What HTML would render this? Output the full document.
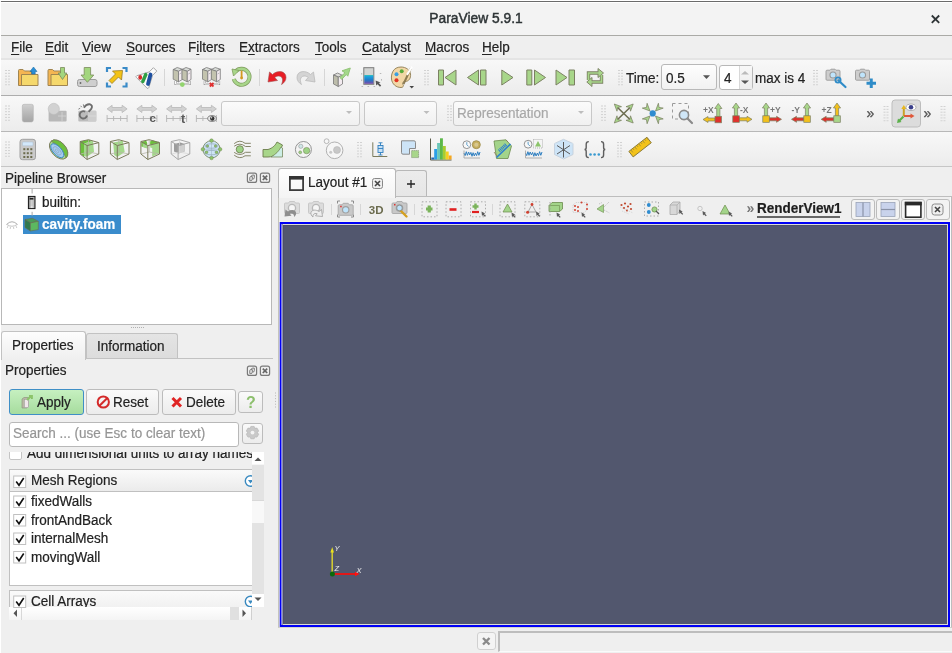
<!DOCTYPE html>
<html><head><meta charset="utf-8">
<style>
*{box-sizing:border-box;margin:0;padding:0}
html,body{width:952px;height:653px;overflow:hidden;background:#efefef}
body{position:relative;font-family:"Liberation Sans",sans-serif;font-size:13.5px;color:#222}
.a{position:absolute}
.t{position:absolute;white-space:pre;line-height:15px;height:15px;font-size:14px;transform:scaleX(0.965);transform-origin:0 0;-webkit-text-stroke:0.2px currentColor}
.u{text-decoration:underline;text-underline-offset:2px}
.hl{position:absolute;height:1px}
.vl{position:absolute;width:1px}
.tb{position:absolute;left:0;width:952px;background:linear-gradient(#f8f8f8,#ececec)}
.grip{position:absolute;width:5px;background-image:radial-gradient(circle,#c4c4c4 0.6px,transparent 0.9px);background-size:2.5px 2.5px}
.ic{position:absolute}
.combo{position:absolute;border:1px solid #c0c0c0;border-radius:3px;background:linear-gradient(#fbfbfb,#f0f0f0)}
.btn{position:absolute;border:1px solid #bcbcbc;border-radius:3px;background:linear-gradient(#fafafa,#ececec)}
</style></head><body><div id="root" style="position:absolute;left:0;top:0;width:952px;height:653px;overflow:hidden;will-change:transform">
<!-- title bar -->
<div class="a" style="left:0;top:0;width:952px;height:35px;background:#f3f3f3"></div>
<div class="hl" style="left:0;top:0;width:952px;background:#fff"></div>
<div class="hl" style="left:1px;top:1px;width:951px;background:#6b6b6b"></div>
<div class="hl" style="left:0;top:2px;width:952px;background:#fff"></div>
<div class="hl" style="left:0;top:35px;width:952px;background:#aaaaa6"></div>
<div class="t" style="left:0;width:952px;text-align:center;top:11px;font-size:13.8px;color:#2e3436;-webkit-text-stroke:0.45px #2e3436;transform:none">ParaView 5.9.1</div>
<svg class="ic" style="left:930px;top:14px" width="11" height="10" viewBox="0 0 11 10"><path d="M1.8 1.5 L9.2 8.8 M9.2 1.5 L1.8 8.8" stroke="#2e3436" stroke-width="1.8"/></svg>

<!-- menu -->
<div class="hl" style="left:0;top:58px;width:952px;height:2px;background:#e4e4e4"></div>
<div class="t" style="left:11px;top:40px"><span class="u">F</span>ile</div>
<div class="t" style="left:45px;top:40px"><span class="u">E</span>dit</div>
<div class="t" style="left:82px;top:40px"><span class="u">V</span>iew</div>
<div class="t" style="left:126px;top:40px"><span class="u">S</span>ources</div>
<div class="t" style="left:188px;top:40px">F<span class="u">i</span>lters</div>
<div class="t" style="left:239px;top:40px">E<span class="u">x</span>tractors</div>
<div class="t" style="left:315px;top:40px"><span class="u">T</span>ools</div>
<div class="t" style="left:362px;top:40px"><span class="u">C</span>atalyst</div>
<div class="t" style="left:425px;top:40px"><span class="u">M</span>acros</div>
<div class="t" style="left:482px;top:40px"><span class="u">H</span>elp</div>

<!-- toolbars -->
<div class="tb" style="top:60px;height:35px"></div>
<div class="hl" style="left:0;top:95px;width:952px;background:#adadad"></div>
<div class="tb" style="top:96px;height:35px"></div>
<div class="hl" style="left:0;top:131px;width:952px;background:#b8b8b8"></div>
<div class="tb" style="top:132px;height:34px"></div>
<div class="hl" style="left:0;top:166px;width:952px;background:#c6c6c6"></div>
<div class="vl" style="left:0;top:3px;height:650px;background:#fff"></div>


<!-- time widgets -->
<div class="t" style="left:626px;top:71px">Time:</div>
<div class="combo" style="left:661px;top:64px;width:56px;height:26px;background:linear-gradient(#fdfdfd,#f1f1f1);border-color:#b8b8b8"></div>
<div class="t" style="left:666px;top:71px">0.5</div>
<div class="a" style="left:719px;top:65px;width:34px;height:25px;background:#fff;border:1px solid #b8b8b8;border-radius:3px"></div>
<div class="a" style="left:739px;top:66px;width:13px;height:23px;background:linear-gradient(#f8f8f8,#ececec);border-left:1px solid #d8d8d8"></div>
<div class="t" style="left:724px;top:71px">4</div>
<div class="t" style="left:755px;top:71px">max is 4</div>
<!-- row 2 combos -->
<div class="combo" style="left:221px;top:101px;width:139px;height:25px;border-color:#c8c8c8"></div>
<div class="combo" style="left:364px;top:101px;width:73px;height:25px;border-color:#c8c8c8"></div>
<div class="combo" style="left:453px;top:101px;width:139px;height:25px;border-color:#c8c8c8"></div>
<div class="t" style="left:457px;top:106px;color:#a8a8a8">Representation</div>

<div id="tb2"></div>
<div id="tb3"></div>

<!-- pipeline browser -->
<div class="t" style="left:5px;top:171px">Pipeline Browser</div>


<div class="a" style="left:1px;top:188px;width:271px;height:137px;background:#fff;border:1px solid #b8b8b8"></div>
<div class="t" style="left:42px;top:195px">builtin:</div>
<div class="a" style="left:23px;top:215px;width:98px;height:19px;background:#3a8ccc"></div>
<div class="t" style="left:42px;top:217px;font-weight:bold;color:#fff">cavity.foam</div>



<!-- right area -->

<div class="a" style="left:278px;top:196px;width:674px;height:432px;background:#efefef;border:1px solid #bdbdbd;border-left-color:#c4c4bc;border-bottom-color:#d4d4cc"></div>
<div class="vl" style="left:950px;top:197px;height:430px;background:#fafafa"></div>
<div class="a" style="left:395px;top:170px;width:32px;height:26px;background:linear-gradient(#ececec,#e6e6e6);border:1px solid #b8b8b8;border-bottom:none;border-radius:3px 3px 0 0"></div>
<div class="a" style="left:278px;top:168px;width:118px;height:30px;background:linear-gradient(#fefefe,#f4f4f4);border:1px solid #b8b8b8;border-bottom:none;border-radius:3px 3px 0 0"></div>
<svg class="ic" style="left:288px;top:175px" width="17" height="17" viewBox="0 0 17 17"><rect x="1.9" y="1.9" width="13.2" height="13.2" fill="none" stroke="#3c3c3c" stroke-width="1.8"/><rect x="1" y="1" width="15" height="3.6" fill="#333"/></svg>
<div class="t" style="left:308px;top:175px">Layout #1</div>
<svg class="ic" style="left:372px;top:178px" width="11" height="11" viewBox="0 0 11 11"><rect x="0.5" y="0.5" width="10" height="10" rx="2" fill="#eee" stroke="#888"/><path d="M3 3 L8 8 M8 3 L3 8" stroke="#444" stroke-width="1.6"/></svg>
<svg class="ic" style="left:406px;top:179px" width="10" height="10" viewBox="0 0 10 10"><path d="M1 5 H9 M5 1 V9" stroke="#222" stroke-width="1.3"/></svg>
<div class="a" style="left:279px;top:221px;width:671px;height:406px;background:#f6f6ea"></div>
<div class="a" style="left:280px;top:222px;width:670px;height:405px;background:#0000f4"></div>
<div class="a" style="left:282px;top:224px;width:666px;height:401px;background:#dcdcd4"></div>
<div class="a" style="left:283px;top:225px;width:664px;height:399px;background:#52576e;border-top:1px solid #4a4e66;border-left:1px solid #4c5068"></div>
<div class="vl" style="left:279px;top:222px;height:405px;background:#b0b0f0"></div>
<div class="vl" style="left:281px;top:224px;height:401px;background:#7c7cf0"></div>
<div class="vl" style="left:282px;top:224px;height:401px;background:#9094aa"></div>
<div class="t" style="left:757px;top:201px;font-weight:bold;color:#1e1e1e">RenderView1</div>
<div class="hl" style="left:757px;top:216px;width:83px;height:2px;background:#666"></div>
<div class="t" style="left:746.5px;top:201px;color:#777;font-size:14px;font-weight:bold;transform:none;-webkit-text-stroke:0">&#187;</div>
<div class="btn" style="left:851px;top:199px;width:24px;height:21px;background:#f3f3f3"></div>
<div class="btn" style="left:876px;top:199px;width:24px;height:21px;background:#f3f3f3"></div>
<div class="btn" style="left:901px;top:199px;width:24px;height:21px;background:#f3f3f3"></div>
<div class="btn" style="left:926px;top:199px;width:24px;height:21px;background:#f3f3f3"></div>


<!-- properties -->

<div class="a" style="left:86px;top:333px;width:92px;height:26px;background:linear-gradient(#e4e4e4,#dcdcdc);border:1px solid #c2c2c2;border-bottom:none;border-radius:3px 3px 0 0"></div>
<div class="hl" style="left:86px;top:358px;width:187px;background:#c2c2c2"></div>
<div class="a" style="left:1px;top:331px;width:85px;height:29px;background:linear-gradient(#fdfdfd,#efefef);border:1px solid #c2c2c2;border-bottom:none;border-radius:3px 3px 0 0"></div>
<div class="t" style="left:12px;top:338px">Properties</div>
<div class="t" style="left:97px;top:339px">Information</div>
<div class="t" style="left:5px;top:363px">Properties</div>

<div class="a" style="left:9px;top:389px;width:75px;height:26px;border:1px solid #3f8fc6;border-radius:3px;background:linear-gradient(#c6f0c0,#a6dc9e)"></div>
<div class="t" style="left:37px;top:395px">Apply</div>
<div class="btn" style="left:86px;top:389px;width:73px;height:26px"></div>
<div class="t" style="left:113px;top:395px">Reset</div>
<div class="btn" style="left:162px;top:389px;width:74px;height:26px"></div>
<div class="t" style="left:186px;top:395px">Delete</div>
<div class="btn" style="left:238px;top:391px;width:25px;height:22px"></div>
<div class="t" style="left:246px;top:394px;color:#8cbf6c;font-size:16px;line-height:17px;height:17px;font-weight:bold;transform:none;-webkit-text-stroke:0">?</div>
<div class="a" style="left:9px;top:422px;width:230px;height:25px;background:#fff;border:1px solid #b8b8b8;border-radius:3px"></div>
<div class="t" style="left:13px;top:426px;color:#959595">Search ... (use Esc to clear text)</div>
<div class="btn" style="left:242px;top:423px;width:21px;height:21px"></div>
<!-- scroll area -->
<div class="a" style="left:9px;top:452px;width:243px;height:155px;overflow:hidden">
  <div class="a" style="left:0;top:-3px;width:13px;height:11px;background:#fff;border:1px solid #c4c4c4;border-radius:2px"></div>
  <div class="t" style="left:18px;top:-6px;color:#222">Add dimensional units to array names</div>
  <div class="a" style="left:0;top:17px;width:260px;height:117px;border:1px solid #c0c0c0;background:#fff"></div>
  <div class="a" style="left:0;top:17px;width:260px;height:23px;border:1px solid #c0c0c0;background:linear-gradient(#fafafa,#ebebeb)"></div>
  <div class="t" style="left:22px;top:21px">Mesh Regions</div>
  <div class="t" style="left:22px;top:42px">fixedWalls</div>
  <div class="t" style="left:22px;top:61px">frontAndBack</div>
  <div class="t" style="left:22px;top:79px">internalMesh</div>
  <div class="t" style="left:22px;top:98px">movingWall</div>
  <div class="a" style="left:0;top:138px;width:260px;height:30px;border:1px solid #c0c0c0;background:linear-gradient(#fafafa,#ebebeb)"></div>
  <div class="t" style="left:22px;top:142px">Cell Arrays</div>
</div>
<!-- v scrollbar -->
<div class="a" style="left:252px;top:452px;width:12px;height:155px;background:#f6f6f6"></div>
<div class="a" style="left:252px;top:452px;width:12px;height:12px;background:#fff"></div>
<div class="a" style="left:252px;top:465px;width:12px;height:130px;background:#e3e3e3"></div>
<div class="a" style="left:252px;top:500px;width:12px;height:23px;background:#f8f8f8;border-top:1px solid #d8d8d8"></div>
<div class="a" style="left:252px;top:594px;width:12px;height:13px;background:#fff"></div>
<!-- h scrollbar -->
<div class="a" style="left:9px;top:607px;width:243px;height:13px;background:linear-gradient(#fff,#f4f4f4)"></div>
<div class="vl" style="left:21px;top:607px;height:13px;background:#d8d8d8"></div>
<div class="a" style="left:230px;top:607px;width:9px;height:13px;background:#e0e0e0"></div>
<div class="vl" style="left:251px;top:607px;height:13px;background:#d0d0d0"></div>


<!-- status bar -->

<div class="btn" style="left:477px;top:632px;width:19px;height:18px;background:#f4f4f4;border-color:#d0d0d0"></div>
<div class="a" style="left:498px;top:631px;width:454px;height:21px;background:#efefef;border-top:2px solid #bdbdbd;border-left:2px solid #bdbdbd;border-bottom:1px solid #fafafa"></div>

<svg class="a" style="left:0;top:0" width="952" height="653" viewBox="0 0 952 653"><rect x="5" y="70.00" width="2" height="1" fill="#d2d2d2"/>
<rect x="8" y="70.00" width="2" height="1" fill="#d2d2d2"/>
<rect x="5" y="72.85" width="2" height="1" fill="#d2d2d2"/>
<rect x="8" y="72.85" width="2" height="1" fill="#d2d2d2"/>
<rect x="5" y="75.70" width="2" height="1" fill="#d2d2d2"/>
<rect x="8" y="75.70" width="2" height="1" fill="#d2d2d2"/>
<rect x="5" y="78.55" width="2" height="1" fill="#d2d2d2"/>
<rect x="8" y="78.55" width="2" height="1" fill="#d2d2d2"/>
<rect x="5" y="81.40" width="2" height="1" fill="#d2d2d2"/>
<rect x="8" y="81.40" width="2" height="1" fill="#d2d2d2"/>
<rect x="5" y="84.25" width="2" height="1" fill="#d2d2d2"/>
<rect x="8" y="84.25" width="2" height="1" fill="#d2d2d2"/>
<path d="M18.5 85.5 V70.5 Q18.5 69.5 19.5 69.5 H23 L24.5 71 H31.5 V85.5 Z" fill="#f4b552" stroke="#a08550"/>
<path d="M21.5 85.5 V74.5 H38 V85.5 Z" fill="#f5d86c" stroke="#a08550"/>
<path d="M33.5 67 L37 71.5 H35.2 V74 H31.8 V71.5 H30 Z" fill="#2a8fd6" stroke="#1f6fa8" stroke-width="0.6"/>
<path d="M48.0 85.5 V70.5 Q48.0 69.5 49.0 69.5 H52.5 L54.0 71 H61.0 V85.5 Z" fill="#f4b552" stroke="#a08550"/>
<path d="M51.0 85.5 V74.5 H67.5 V85.5 Z" fill="#f5d86c" stroke="#a08550"/>
<path d="M60.5 67.5 H64.5 V73 H66.8 L62.5 79.5 L58.2 73 H60.5 Z" fill="#a3d67e" stroke="#7b8b5c" stroke-width="0.8"/>
<rect x="77.5" y="79.5" width="19.5" height="7" rx="2" fill="#cfcfcf" stroke="#9c9c9c"/>
<circle cx="80.5" cy="83" r="0.9" fill="#666"/>
<path d="M84.2 67.5 H90.6 V75 H93.8 L87.4 82.3 L81 75 H84.2 Z" fill="#a3d67e" stroke="#7b8b5c" stroke-width="0.8"/>
<path d="M107 72 V68 H111" fill="none" stroke="#3a8bc8" stroke-width="2.2"/>
<path d="M126.5 72 V68 H122.5" fill="none" stroke="#3a8bc8" stroke-width="2.2"/>
<path d="M107 82.5 V86.5 H111" fill="none" stroke="#3a8bc8" stroke-width="2.2"/>
<path d="M126.5 82.5 V86.5 H122.5" fill="none" stroke="#3a8bc8" stroke-width="2.2"/>
<path d="M122.5 70.5 L121.5 80 L118.5 77 L112 83.5 L109 80.5 L115.5 74 L112.5 71 Z" fill="#f3c316" stroke="#9a7c26" stroke-width="0.8"/>
<g transform="translate(147 77.5) rotate(45)"><path d="M-2.4 -11.5 H2.4 V-5.5 L8.5 6 Q9 7.5 7.5 7.5 H-7.5 Q-9 7.5 -8.5 6 L-2.4 -5.5 Z" fill="#fbfbfb" stroke="#a4a4a4" stroke-width="0.9"/></g>
<ellipse cx="140.2" cy="77.4" rx="1.9" ry="2.3" fill="#d42a2a"/>
<path d="M142.8 81.5 L145.8 74.5" stroke="#2ea043" stroke-width="3.4" stroke-linecap="round"/>
<path d="M148 84 L150.5 74.5" stroke="#1e50a0" stroke-width="3.8" stroke-linecap="round"/>
<rect x="164" y="69" width="1" height="17" fill="#d6d6d6"/>
<path d="M175.5 81 V84 H189.7 V81" fill="none" stroke="#9a9a9a" stroke-width="2.2"/><path d="M175.5 81 V84 H189.7 V81" fill="none" stroke="#fafafa" stroke-width="1"/>
<path d="M173.2 69.5 L177.2 67.5 L182.2 69.2 L178.5 71.3 Z" fill="#d9dcd8" stroke="#7a7a7a" stroke-width="0.8"/>
<path d="M173.2 69.5 L178.5 71.3 V81.8 L173.2 79.2 Z" fill="#c3c3ae" stroke="#7a7a7a" stroke-width="0.8"/>
<path d="M178.5 71.3 L182.2 69.2 V79.5 L178.5 81.8 Z" fill="#f2eaef" stroke="#7a7a7a" stroke-width="0.8"/>
<path d="M179.5 74 L181.2 73" stroke="#999" stroke-width="0.6"/>
<path d="M182.0 69.5 L186.0 67.5 L191.0 69.2 L187.3 71.3 Z" fill="#d9dcd8" stroke="#7a7a7a" stroke-width="0.8"/>
<path d="M182.0 69.5 L187.3 71.3 V81.8 L182.0 79.2 Z" fill="#c3c3ae" stroke="#7a7a7a" stroke-width="0.8"/>
<path d="M187.3 71.3 L191.0 69.2 V79.5 L187.3 81.8 Z" fill="#f2eaef" stroke="#7a7a7a" stroke-width="0.8"/>
<path d="M188.3 74 L190.0 73" stroke="#999" stroke-width="0.6"/>
<circle cx="182.29999999999998" cy="84.6" r="2.4" fill="#92d46e"/>
<path d="M204.8 81 V84 H219.0 V81" fill="none" stroke="#9a9a9a" stroke-width="2.2"/><path d="M204.8 81 V84 H219.0 V81" fill="none" stroke="#fafafa" stroke-width="1"/>
<path d="M202.5 69.5 L206.5 67.5 L211.5 69.2 L207.8 71.3 Z" fill="#d9dcd8" stroke="#7a7a7a" stroke-width="0.8"/>
<path d="M202.5 69.5 L207.8 71.3 V81.8 L202.5 79.2 Z" fill="#c3c3ae" stroke="#7a7a7a" stroke-width="0.8"/>
<path d="M207.8 71.3 L211.5 69.2 V79.5 L207.8 81.8 Z" fill="#f2eaef" stroke="#7a7a7a" stroke-width="0.8"/>
<path d="M208.8 74 L210.5 73" stroke="#999" stroke-width="0.6"/>
<path d="M211.3 69.5 L215.3 67.5 L220.3 69.2 L216.60000000000002 71.3 Z" fill="#d9dcd8" stroke="#7a7a7a" stroke-width="0.8"/>
<path d="M211.3 69.5 L216.60000000000002 71.3 V81.8 L211.3 79.2 Z" fill="#c3c3ae" stroke="#7a7a7a" stroke-width="0.8"/>
<path d="M216.60000000000002 71.3 L220.3 69.2 V79.5 L216.60000000000002 81.8 Z" fill="#f2eaef" stroke="#7a7a7a" stroke-width="0.8"/>
<path d="M217.60000000000002 74 L219.3 73" stroke="#999" stroke-width="0.6"/>
<path d="M209.8 82.8 L213.5 86.5 M213.5 82.8 L209.8 86.5" stroke="#e03030" stroke-width="1.8"/>
<path d="M235.5 71.5 A8 8 0 1 1 233.8 79" fill="none" stroke="#7d9a5c" stroke-width="4"/>
<path d="M235.5 71.5 A8 8 0 1 1 233.8 79" fill="none" stroke="#a8d68a" stroke-width="2.6"/>
<path d="M232 69 L239 70.5 L233.5 76 Z" fill="#a8d68a" stroke="#7d9a5c" stroke-width="0.8"/>
<path d="M241.6 71.5 V77.5" stroke="#d49a20" stroke-width="1.8" stroke-linecap="round"/>
<circle cx="241.6" cy="78" r="1.4" fill="#d49a20"/>
<rect x="259" y="69" width="1" height="17" fill="#d6d6d6"/>
<path d="M268 82 L269.5 72 L272.5 74.5 C277 70 286 70.5 286 77.5 C286 80.5 284 83 281.5 84.5 C283 81.5 283.5 76.5 279 76 C277 75.8 275.5 77 274.8 77.5 L277.5 80.5 Z" fill="#e81d25" stroke="#a05050" stroke-width="0.6"/>
<g transform="translate(583 0) scale(-1 1)"><path d="M268 82 L269.5 72 L272.5 74.5 C277 70 286 70.5 286 77.5 C286 80.5 284 83 281.5 84.5 C283 81.5 283.5 76.5 279 76 C277 75.8 275.5 77 274.8 77.5 L277.5 80.5 Z" fill="#d4d4d4" stroke="#b4b4b4" stroke-width="0.7"/></g>
<rect x="324" y="69" width="1" height="17" fill="#d6d6d6"/>
<path d="M333.5 75 L337.5 73 L342.5 75.3 L338.3 77 Z" fill="#dcdcd8" stroke="#777" stroke-width="0.8"/>
<path d="M333.5 75 L338.3 77 V86.5 L333.5 84 Z" fill="#bdbdab" stroke="#777" stroke-width="0.8"/>
<path d="M338.3 77 L342.5 75.3 V84 L338.3 86.5 Z" fill="#f3ebf0" stroke="#777" stroke-width="0.8"/>
<path d="M339.8 77.5 L345 72.8 L342 70.8 L350.3 68 L347.8 76.2 L346.3 74.5 L341.8 79.3 Z" fill="#a3d88a" stroke="#8cc070" stroke-width="0.9"/>
<defs><linearGradient id="cm" x1="0" y1="0" x2="0" y2="1"><stop offset="0" stop-color="#3cc8a8"/><stop offset="0.12" stop-color="#1aa8e0"/><stop offset="0.55" stop-color="#1f7cc8"/><stop offset="1" stop-color="#7a4aa8"/></linearGradient></defs>
<rect x="363.8" y="67.7" width="10" height="16.6" fill="#d2d4d2" stroke="#7a7a7a" stroke-width="1"/>
<rect x="364.3" y="75" width="9" height="8.8" fill="url(#cm)"/>
<rect x="361.2" y="73" width="1" height="1.6" fill="#b8b8b8"/>
<rect x="361.2" y="79.5" width="1" height="1.6" fill="#b8b8b8"/>
<rect x="361.5" y="86" width="1.6" height="1" fill="#b8b8b8"/>
<rect x="367.5" y="86" width="1.6" height="1" fill="#b8b8b8"/>
<rect x="373.5" y="86" width="1.6" height="1" fill="#b8b8b8"/>
<rect x="379.8" y="73" width="1.5" height="1" fill="#b8b8b8"/>
<rect x="381" y="79" width="1" height="1.6" fill="#b8b8b8"/>
<path d="M375.6 80.5 L376.2 85.5 L377.6 84.2 L380 86.8 L381.2 85.6 L378.8 83 L380.6 82.4 Z" fill="#555"/>
<path d="M401 67 C393 67 391 74 391.5 79 C392 84 396 87.5 401 87.5 C403 87.5 404 86 403 84.5 C402 83 403 81.5 405 81.5 C409 81.5 411 78 410.5 74 C410 70 406 67 401 67 Z" fill="#f2d7a6" stroke="#8c7a50" stroke-width="0.9"/>
<circle cx="396.5" cy="74.3" r="2" fill="#3aa0e0"/><circle cx="401.7" cy="71.2" r="2" fill="#5aab3c"/><circle cx="396.5" cy="80.3" r="2" fill="#e03424"/>
<path d="M411 68 L403.5 84" stroke="#8c7a50" stroke-width="2"/><path d="M411.5 67.5 L407.5 74" stroke="#fff" stroke-width="2.2" stroke-linecap="round"/>
<path d="M409.5 86 H414 L411.75 88.5 Z" fill="#444"/>
<rect x="424" y="70.00" width="2" height="1" fill="#d2d2d2"/>
<rect x="427" y="70.00" width="2" height="1" fill="#d2d2d2"/>
<rect x="424" y="72.85" width="2" height="1" fill="#d2d2d2"/>
<rect x="427" y="72.85" width="2" height="1" fill="#d2d2d2"/>
<rect x="424" y="75.70" width="2" height="1" fill="#d2d2d2"/>
<rect x="427" y="75.70" width="2" height="1" fill="#d2d2d2"/>
<rect x="424" y="78.55" width="2" height="1" fill="#d2d2d2"/>
<rect x="427" y="78.55" width="2" height="1" fill="#d2d2d2"/>
<rect x="424" y="81.40" width="2" height="1" fill="#d2d2d2"/>
<rect x="427" y="81.40" width="2" height="1" fill="#d2d2d2"/>
<rect x="424" y="84.25" width="2" height="1" fill="#d2d2d2"/>
<rect x="427" y="84.25" width="2" height="1" fill="#d2d2d2"/>
<path d="M438.5 70 H443.5 V85 H438.5 Z" fill="#a8d68a" stroke="#7b8062" stroke-width="1"/>
<path d="M456 70 V85 L445 77.5 Z" fill="#a8d68a" stroke="#7b8062" stroke-width="1"/>
<path d="M478.5 70 V85 L467.5 77.5 Z" fill="#a8d68a" stroke="#7b8062" stroke-width="1"/>
<path d="M480.5 70 H486 V85 H480.5 Z" fill="#a8d68a" stroke="#7b8062" stroke-width="1"/>
<path d="M501.8 70 L513 77.5 L501.8 85 Z" fill="#a8d68a" stroke="#7b8062" stroke-width="1"/>
<path d="M526.8 70 H531.8 V85 H526.8 Z" fill="#a8d68a" stroke="#7b8062" stroke-width="1"/>
<path d="M534.5 70 L545.5 77.5 L534.5 85 Z" fill="#a8d68a" stroke="#7b8062" stroke-width="1"/>
<path d="M556 70 L567 77.5 L556 85 Z" fill="#a8d68a" stroke="#7b8062" stroke-width="1"/>
<path d="M569 70 H574.5 V85 H569 Z" fill="#a8d68a" stroke="#7b8062" stroke-width="1"/>
<path d="M588.5 80 V73 H599" fill="none" stroke="#7b8062" stroke-width="3.4"/>
<path d="M601.5 75 V82 H591" fill="none" stroke="#7b8062" stroke-width="3.4"/>
<path d="M598 68.5 L603.5 73 L598 77.5 Z" fill="#a8d68a" stroke="#7b8062" stroke-width="0.9"/>
<path d="M592 77.5 L586.8 82 L592 86.5 Z" fill="#a8d68a" stroke="#7b8062" stroke-width="0.9"/>
<path d="M588.5 80 V73 H599" fill="none" stroke="#a8d68a" stroke-width="1.7"/>
<path d="M601.5 75 V82 H591" fill="none" stroke="#a8d68a" stroke-width="1.7"/>
<rect x="618" y="70.00" width="2" height="1" fill="#d2d2d2"/>
<rect x="621" y="70.00" width="2" height="1" fill="#d2d2d2"/>
<rect x="618" y="72.85" width="2" height="1" fill="#d2d2d2"/>
<rect x="621" y="72.85" width="2" height="1" fill="#d2d2d2"/>
<rect x="618" y="75.70" width="2" height="1" fill="#d2d2d2"/>
<rect x="621" y="75.70" width="2" height="1" fill="#d2d2d2"/>
<rect x="618" y="78.55" width="2" height="1" fill="#d2d2d2"/>
<rect x="621" y="78.55" width="2" height="1" fill="#d2d2d2"/>
<rect x="618" y="81.40" width="2" height="1" fill="#d2d2d2"/>
<rect x="621" y="81.40" width="2" height="1" fill="#d2d2d2"/>
<rect x="618" y="84.25" width="2" height="1" fill="#d2d2d2"/>
<rect x="621" y="84.25" width="2" height="1" fill="#d2d2d2"/>
<rect x="813" y="70.00" width="2" height="1" fill="#d2d2d2"/>
<rect x="816" y="70.00" width="2" height="1" fill="#d2d2d2"/>
<rect x="813" y="72.85" width="2" height="1" fill="#d2d2d2"/>
<rect x="816" y="72.85" width="2" height="1" fill="#d2d2d2"/>
<rect x="813" y="75.70" width="2" height="1" fill="#d2d2d2"/>
<rect x="816" y="75.70" width="2" height="1" fill="#d2d2d2"/>
<rect x="813" y="78.55" width="2" height="1" fill="#d2d2d2"/>
<rect x="816" y="78.55" width="2" height="1" fill="#d2d2d2"/>
<rect x="813" y="81.40" width="2" height="1" fill="#d2d2d2"/>
<rect x="816" y="81.40" width="2" height="1" fill="#d2d2d2"/>
<rect x="813" y="84.25" width="2" height="1" fill="#d2d2d2"/>
<rect x="816" y="84.25" width="2" height="1" fill="#d2d2d2"/>
<path d="M826 71.2 Q826 70.2 827 70.2 H830 L831 69.2 H835 L836 70.2 H839 Q840 70.2 840 71.2 V79.2 Q840 80.2 839 80.2 H827 Q826 80.2 826 79.2 Z" fill="#cdcdcd" stroke="#9a9a9a" stroke-width="0.9"/>
<circle cx="833" cy="75.0" r="3.6" fill="#9a9a9a"/><circle cx="833" cy="75.0" r="2.5" fill="#bfe4fb"/>
<path d="M838.5 80.5 L845.5 87" stroke="#2f8cc8" stroke-width="2.2" stroke-linecap="round"/><circle cx="838" cy="80" r="2.6" fill="none" stroke="#2f8cc8" stroke-width="1.8"/>
<path d="M855.5 71.2 Q855.5 70.2 856.5 70.2 H859.5 L860.5 69.2 H864.5 L865.5 70.2 H868.5 Q869.5 70.2 869.5 71.2 V79.2 Q869.5 80.2 868.5 80.2 H856.5 Q855.5 80.2 855.5 79.2 Z" fill="#cdcdcd" stroke="#9a9a9a" stroke-width="0.9"/>
<circle cx="862.5" cy="75.0" r="3.6" fill="#9a9a9a"/><circle cx="862.5" cy="75.0" r="2.5" fill="#bfe4fb"/>
<path d="M866.5 83.3 H876 M871.25 78.5 V88" stroke="#2f8cc8" stroke-width="3"/>
<rect x="5" y="105.50" width="2" height="1" fill="#d2d2d2"/>
<rect x="8" y="105.50" width="2" height="1" fill="#d2d2d2"/>
<rect x="5" y="108.35" width="2" height="1" fill="#d2d2d2"/>
<rect x="8" y="108.35" width="2" height="1" fill="#d2d2d2"/>
<rect x="5" y="111.20" width="2" height="1" fill="#d2d2d2"/>
<rect x="8" y="111.20" width="2" height="1" fill="#d2d2d2"/>
<rect x="5" y="114.05" width="2" height="1" fill="#d2d2d2"/>
<rect x="8" y="114.05" width="2" height="1" fill="#d2d2d2"/>
<rect x="5" y="116.90" width="2" height="1" fill="#d2d2d2"/>
<rect x="8" y="116.90" width="2" height="1" fill="#d2d2d2"/>
<rect x="5" y="119.75" width="2" height="1" fill="#d2d2d2"/>
<rect x="8" y="119.75" width="2" height="1" fill="#d2d2d2"/>
<defs><linearGradient id="g2" x1="0" y1="0" x2="0" y2="1"><stop offset="0" stop-color="#d0d0d0"/><stop offset="0.4" stop-color="#bdbdbd"/><stop offset="1" stop-color="#a4a4a4"/></linearGradient></defs>
<rect x="22.3" y="104.3" width="11" height="17.6" rx="1.8" fill="url(#g2)" stroke="#b0b0b0" stroke-width="0.6"/>
<rect x="48.6" y="110.8" width="18" height="10.6" rx="1" fill="#b8b8b8"/>
<circle cx="53.8" cy="108.9" r="5.6" fill="#d2d2d2" stroke="#bdbdbd" stroke-width="0.6"/>
<path d="M58 116 H66 M62 112 V121" stroke="#d8d8d8" stroke-width="0.7"/>
<rect x="78.3" y="110.8" width="18" height="10.6" rx="1" fill="#bcbcbc"/><rect x="88" y="110.8" width="8.3" height="10.6" rx="1" fill="#cdcdcd"/><path d="M88 116 H96" stroke="#e0e0e0" stroke-width="0.6"/>
<path d="M85.2 111.6 A3.7 3.7 0 1 0 87 115.5" fill="none" stroke="#6e6e6e" stroke-width="1.9"/>
<path d="M83.8 107.6 Q86.5 103.6 90 104.3 Q93.2 105.5 91.2 109 L88.6 111.8" fill="none" stroke="#6e6e6e" stroke-width="1.9"/>
<path d="M78.4 109.2 L80.2 108.2 M80.6 105.8 L81.8 107.2 M83.3 104.3 L83.7 106" stroke="#777" stroke-width="0.9"/>
<path d="M107.1 108.9 L112.1 105.3 V107.5 H122.1 V105.3 L127.1 108.9 L122.1 112.5 V110.3 H112.1 V112.5 Z" fill="#d2d2d2" stroke="#b8b8b8" stroke-width="0.8"/>
<path d="M107.1 118.5 H127.1 M107.1 115 V122 M113.6 116 V121 M120.6 116 V121 M127.1 115 V122" stroke="#b4b4b4" stroke-width="0.9"/>
<path d="M136.9 108.9 L141.9 105.3 V107.5 H151.9 V105.3 L156.9 108.9 L151.9 112.5 V110.3 H141.9 V112.5 Z" fill="#d2d2d2" stroke="#b8b8b8" stroke-width="0.8"/>
<path d="M136.9 118.5 H156.9 M136.9 115 V122 M143.4 116 V121 M150.4 116 V121 M156.9 115 V122" stroke="#b4b4b4" stroke-width="0.9"/>
<text x="149.5" y="122.3" font-family="Liberation Sans" font-weight="bold" font-size="11.5" fill="#5a5a5a">c</text>
<path d="M166.6 108.9 L171.6 105.3 V107.5 H181.6 V105.3 L186.6 108.9 L181.6 112.5 V110.3 H171.6 V112.5 Z" fill="#d2d2d2" stroke="#b8b8b8" stroke-width="0.8"/>
<path d="M166.6 118.5 H186.6 M166.6 115 V122 M173.1 116 V121 M180.1 116 V121 M186.6 115 V122" stroke="#b4b4b4" stroke-width="0.9"/>
<text x="181" y="122.5" font-family="Liberation Sans" font-weight="bold" font-size="12.5" fill="#5a5a5a">t</text>
<path d="M196.4 108.9 L201.4 105.3 V107.5 H211.4 V105.3 L216.4 108.9 L211.4 112.5 V110.3 H201.4 V112.5 Z" fill="#d2d2d2" stroke="#b8b8b8" stroke-width="0.8"/>
<path d="M196.4 118.5 H216.4 M196.4 115 V122 M202.9 116 V121 M209.9 116 V121 M216.4 115 V122" stroke="#b4b4b4" stroke-width="0.9"/>
<ellipse cx="212" cy="118.5" rx="4.3" ry="2.9" fill="#e8e8e8" stroke="#666" stroke-width="0.8"/><circle cx="212.3" cy="118.5" r="2.2" fill="#333"/><circle cx="211.6" cy="117.8" r="0.7" fill="#ddd"/>
<rect x="447" y="105.50" width="2" height="1" fill="#d2d2d2"/>
<rect x="450" y="105.50" width="2" height="1" fill="#d2d2d2"/>
<rect x="447" y="108.35" width="2" height="1" fill="#d2d2d2"/>
<rect x="450" y="108.35" width="2" height="1" fill="#d2d2d2"/>
<rect x="447" y="111.20" width="2" height="1" fill="#d2d2d2"/>
<rect x="450" y="111.20" width="2" height="1" fill="#d2d2d2"/>
<rect x="447" y="114.05" width="2" height="1" fill="#d2d2d2"/>
<rect x="450" y="114.05" width="2" height="1" fill="#d2d2d2"/>
<rect x="447" y="116.90" width="2" height="1" fill="#d2d2d2"/>
<rect x="450" y="116.90" width="2" height="1" fill="#d2d2d2"/>
<rect x="447" y="119.75" width="2" height="1" fill="#d2d2d2"/>
<rect x="450" y="119.75" width="2" height="1" fill="#d2d2d2"/>
<rect x="601" y="105.50" width="2" height="1" fill="#d2d2d2"/>
<rect x="604" y="105.50" width="2" height="1" fill="#d2d2d2"/>
<rect x="601" y="108.35" width="2" height="1" fill="#d2d2d2"/>
<rect x="604" y="108.35" width="2" height="1" fill="#d2d2d2"/>
<rect x="601" y="111.20" width="2" height="1" fill="#d2d2d2"/>
<rect x="604" y="111.20" width="2" height="1" fill="#d2d2d2"/>
<rect x="601" y="114.05" width="2" height="1" fill="#d2d2d2"/>
<rect x="604" y="114.05" width="2" height="1" fill="#d2d2d2"/>
<rect x="601" y="116.90" width="2" height="1" fill="#d2d2d2"/>
<rect x="604" y="116.90" width="2" height="1" fill="#d2d2d2"/>
<rect x="601" y="119.75" width="2" height="1" fill="#d2d2d2"/>
<rect x="604" y="119.75" width="2" height="1" fill="#d2d2d2"/>
<path d="M616 106 L631.5 121 M631.5 106 L616 121" stroke="#6e6e52" stroke-width="1.6"/>
<g transform="translate(614.3 104) rotate(45)"><path d="M0 0 L7 -3.2 L4.8 0 L7 3.2 Z" fill="#a8d68a" stroke="#7b8062" stroke-width="0.7"/></g>
<g transform="translate(633.2 104) rotate(135)"><path d="M0 0 L7 -3.2 L4.8 0 L7 3.2 Z" fill="#a8d68a" stroke="#7b8062" stroke-width="0.7"/></g>
<g transform="translate(614.3 123) rotate(-45)"><path d="M0 0 L7 -3.2 L4.8 0 L7 3.2 Z" fill="#a8d68a" stroke="#7b8062" stroke-width="0.7"/></g>
<g transform="translate(633.2 123) rotate(-135)"><path d="M0 0 L7 -3.2 L4.8 0 L7 3.2 Z" fill="#a8d68a" stroke="#7b8062" stroke-width="0.7"/></g>
<g transform="translate(650 111) rotate(-135)"><path d="M0 0 L7.5 -3.4 L5 0 L7.5 3.4 Z" fill="#a8d68a" stroke="#7b8062" stroke-width="0.7"/></g>
<g transform="translate(655.5 111) rotate(-45)"><path d="M0 0 L7.5 -3.4 L5 0 L7.5 3.4 Z" fill="#a8d68a" stroke="#7b8062" stroke-width="0.7"/></g>
<g transform="translate(650 116) rotate(135)"><path d="M0 0 L7.5 -3.4 L5 0 L7.5 3.4 Z" fill="#a8d68a" stroke="#7b8062" stroke-width="0.7"/></g>
<g transform="translate(655.5 116) rotate(45)"><path d="M0 0 L7.5 -3.4 L5 0 L7.5 3.4 Z" fill="#a8d68a" stroke="#7b8062" stroke-width="0.7"/></g>
<circle cx="652.7" cy="113.4" r="3.1" fill="#2f8cd0"/>
<rect x="672.5" y="103.5" width="16" height="15.5" fill="none" stroke="#9a9a9a" stroke-width="1" stroke-dasharray="3 3"/>
<circle cx="684" cy="115" r="4.6" fill="#cfe6f7" stroke="#8a8a8a" stroke-width="1.6"/>
<path d="M687.5 118.5 L692 123" stroke="#8a8a8a" stroke-width="2.2" stroke-linecap="round"/>
<path d="M703 119.5 L708 116.5 V118.0 H715 V121.0 H708 V122.5 Z" fill="#f2c01c" stroke="#7b8062" stroke-width="0.7"/>
<path d="M718.3 103.5 L721.9 108.5 H719.9 V116.5 H716.6999999999999 V108.5 H714.6999999999999 Z" fill="#a8d68a" stroke="#7b8062" stroke-width="0.7"/>
<rect x="715" y="116.3" width="6.5" height="6.5" fill="#e0312c" stroke="#7b8062" stroke-width="0.7"/>
<text x="703" y="112.5" font-family="Liberation Sans" font-weight="bold" font-size="8.5" fill="#777">+X</text>
<path d="M752 119.3 L747 116.3 V117.8 H739 V120.8 H747 V122.3 Z" fill="#f2c01c" stroke="#7b8062" stroke-width="0.7"/>
<path d="M736 103 L739.6 108 H737.6 V116 H734.4 V108 H732.4 Z" fill="#a8d68a" stroke="#7b8062" stroke-width="0.7"/>
<rect x="732.8" y="115.8" width="6.5" height="6.5" fill="#e0312c" stroke="#7b8062" stroke-width="0.7"/>
<text x="740" y="113" font-family="Liberation Sans" font-weight="bold" font-size="8.5" fill="#777">-X</text>
<path d="M781.5 119.3 L776.5 116.3 V117.8 H769 V120.8 H776.5 V122.3 Z" fill="#e0312c" stroke="#7b8062" stroke-width="0.7"/>
<path d="M766 103 L769.6 108 H767.6 V116 H764.4 V108 H762.4 Z" fill="#a8d68a" stroke="#7b8062" stroke-width="0.7"/>
<rect x="762.8" y="115.8" width="6.5" height="6.5" fill="#f2c01c" stroke="#7b8062" stroke-width="0.7"/>
<text x="770" y="113" font-family="Liberation Sans" font-weight="bold" font-size="8.5" fill="#777">+Y</text>
<path d="M791.5 119.3 L796.5 116.3 V117.8 H804 V120.8 H796.5 V122.3 Z" fill="#e0312c" stroke="#7b8062" stroke-width="0.7"/>
<path d="M807 103 L810.6 108 H808.6 V116 H805.4 V108 H803.4 Z" fill="#a8d68a" stroke="#7b8062" stroke-width="0.7"/>
<rect x="803.8" y="115.8" width="6.5" height="6.5" fill="#f2c01c" stroke="#7b8062" stroke-width="0.7"/>
<text x="791.5" y="113" font-family="Liberation Sans" font-weight="bold" font-size="8.5" fill="#777">-Y</text>
<path d="M821.2 119.3 L826.2 116.3 V117.8 H834 V120.8 H826.2 V122.3 Z" fill="#e0312c" stroke="#7b8062" stroke-width="0.7"/>
<path d="M837 103 L840.6 108 H838.6 V116 H835.4 V108 H833.4 Z" fill="#f2c01c" stroke="#7b8062" stroke-width="0.7"/>
<rect x="833.8" y="115.8" width="6.5" height="6.5" fill="#a8d68a" stroke="#7b8062" stroke-width="0.7"/>
<text x="821.5" y="113" font-family="Liberation Sans" font-weight="bold" font-size="8.5" fill="#777">+Z</text>
<text x="866.5" y="118" font-family="Liberation Sans" font-size="14" fill="#555" stroke="#555" stroke-width="0.3">&#187;</text>
<rect x="883.5" y="106.00" width="2" height="1" fill="#d2d2d2"/>
<rect x="886.5" y="106.00" width="2" height="1" fill="#d2d2d2"/>
<rect x="883.5" y="108.85" width="2" height="1" fill="#d2d2d2"/>
<rect x="886.5" y="108.85" width="2" height="1" fill="#d2d2d2"/>
<rect x="883.5" y="111.70" width="2" height="1" fill="#d2d2d2"/>
<rect x="886.5" y="111.70" width="2" height="1" fill="#d2d2d2"/>
<rect x="883.5" y="114.55" width="2" height="1" fill="#d2d2d2"/>
<rect x="886.5" y="114.55" width="2" height="1" fill="#d2d2d2"/>
<rect x="883.5" y="117.40" width="2" height="1" fill="#d2d2d2"/>
<rect x="886.5" y="117.40" width="2" height="1" fill="#d2d2d2"/>
<rect x="883.5" y="120.25" width="2" height="1" fill="#d2d2d2"/>
<rect x="886.5" y="120.25" width="2" height="1" fill="#d2d2d2"/>
<rect x="892" y="100" width="28.5" height="27" rx="3" fill="#dcdcdc" stroke="#bdbdbd"/>
<path d="M903.8 116 V107" stroke="#c9a227" stroke-width="2"/><path d="M903.8 105 L906.3 109 H901.3 Z" fill="#e8b820"/>
<path d="M904 116 H912" stroke="#e0583a" stroke-width="2"/><path d="M914.5 116 L910.5 113.5 V118.5 Z" fill="#e0583a"/>
<path d="M903.5 116.5 L898.5 121.5" stroke="#5ab04a" stroke-width="2.2"/><path d="M897 123 L898 118.5 L901.5 122 Z" fill="#5ab04a"/>
<ellipse cx="911" cy="107.3" rx="5" ry="3.3" fill="#fff" stroke="#888" stroke-width="0.6"/><circle cx="911" cy="107.3" r="2.3" fill="#3a3f8a"/>
<text x="923.5" y="118" font-family="Liberation Sans" font-size="14" fill="#555" stroke="#555" stroke-width="0.3">&#187;</text>
<rect x="940.5" y="106.00" width="2" height="1" fill="#d2d2d2"/>
<rect x="943.5" y="106.00" width="2" height="1" fill="#d2d2d2"/>
<rect x="940.5" y="108.85" width="2" height="1" fill="#d2d2d2"/>
<rect x="943.5" y="108.85" width="2" height="1" fill="#d2d2d2"/>
<rect x="940.5" y="111.70" width="2" height="1" fill="#d2d2d2"/>
<rect x="943.5" y="111.70" width="2" height="1" fill="#d2d2d2"/>
<rect x="940.5" y="114.55" width="2" height="1" fill="#d2d2d2"/>
<rect x="943.5" y="114.55" width="2" height="1" fill="#d2d2d2"/>
<rect x="940.5" y="117.40" width="2" height="1" fill="#d2d2d2"/>
<rect x="943.5" y="117.40" width="2" height="1" fill="#d2d2d2"/>
<rect x="940.5" y="120.25" width="2" height="1" fill="#d2d2d2"/>
<rect x="943.5" y="120.25" width="2" height="1" fill="#d2d2d2"/>
<rect x="5" y="141.50" width="2" height="1" fill="#d2d2d2"/>
<rect x="8" y="141.50" width="2" height="1" fill="#d2d2d2"/>
<rect x="5" y="144.35" width="2" height="1" fill="#d2d2d2"/>
<rect x="8" y="144.35" width="2" height="1" fill="#d2d2d2"/>
<rect x="5" y="147.20" width="2" height="1" fill="#d2d2d2"/>
<rect x="8" y="147.20" width="2" height="1" fill="#d2d2d2"/>
<rect x="5" y="150.05" width="2" height="1" fill="#d2d2d2"/>
<rect x="8" y="150.05" width="2" height="1" fill="#d2d2d2"/>
<rect x="5" y="152.90" width="2" height="1" fill="#d2d2d2"/>
<rect x="8" y="152.90" width="2" height="1" fill="#d2d2d2"/>
<rect x="5" y="155.75" width="2" height="1" fill="#d2d2d2"/>
<rect x="8" y="155.75" width="2" height="1" fill="#d2d2d2"/>
<rect x="20" y="139.3" width="15.5" height="20.4" rx="2.5" fill="#cacaca" stroke="#a0a0a0"/>
<rect x="22.5" y="142" width="10.5" height="3.8" rx="0.8" fill="#d3e8fa" stroke="#a9bfd0" stroke-width="0.5"/>
<rect x="23.3" y="148.2" width="2" height="2" fill="#6b6b4e"/>
<rect x="26.8" y="148.2" width="2" height="2" fill="#6b6b4e"/>
<rect x="30.3" y="148.2" width="2" height="2" fill="#6b6b4e"/>
<rect x="23.3" y="152.2" width="2" height="2" fill="#6b6b4e"/>
<rect x="26.8" y="152.2" width="2" height="2" fill="#6b6b4e"/>
<rect x="30.3" y="152.2" width="2" height="2" fill="#6b6b4e"/>
<rect x="23.3" y="156" width="2" height="2" fill="#6b6b4e"/>
<rect x="26.8" y="156" width="2" height="2" fill="#6b6b4e"/>
<rect x="30.3" y="156" width="2" height="2" fill="#6b6b4e"/>
<g transform="rotate(48 58.6 149.5)"><ellipse cx="58.6" cy="149.5" rx="11.2" ry="7.2" fill="#a8d88a" stroke="#7b7b5c" stroke-width="0.9"/>
<path d="M47.4 149.5 A11.2 7.2 0 0 1 69.8 149.5 Q58.6 145 47.4 149.5 Z" fill="#6cbf3c" stroke="#7b7b5c" stroke-width="0.7"/>
<ellipse cx="58.6" cy="151.3" rx="8.6" ry="4.2" fill="#a4ccf2" stroke="#3a88c0" stroke-width="0.9"/>
<ellipse cx="58.6" cy="151.5" rx="5.2" ry="2.5" fill="none" stroke="#8aa4b8" stroke-width="0.7"/><ellipse cx="58.6" cy="151.6" rx="2.2" ry="1.1" fill="none" stroke="#8aa4b8" stroke-width="0.6"/></g>
<path d="M80.2 141.5 L88.5 139.7 L93.0 141 L84.0 143.6 V156.6 L80.2 154 Z" fill="#6cbf3c"/>
<path d="M84.0 143.6 L93.0 141 L94.0 152 L87.1 156.5 L84.0 156.6 Z" fill="#a3d88a"/>
<path d="M88.5 140.0 L88.5 152.0 M80.5 154.0 L88.5 152.0 L98.8 154.0" fill="none" stroke="#b8b8a8" stroke-width="0.8"/>
<path d="M80.2 141.5 L88.5 139.7 L98.8 142.6 L98.8 154.0 L87.1 159.5 L80.2 154.0 Z M80.2 141.5 L87.1 145.6 L98.8 142.6 M87.1 145.6 L87.1 159.5" fill="none" stroke="#7b7b5c" stroke-width="1"/>
<path d="M113.2 142.5 L122.7 140.8 L124.7 152 L117.3 157 L114.2 155 Z" fill="#a3d88a"/>
<path d="M118.7 140.0 L118.7 152.0 M110.7 154.0 L118.7 152.0 L129.0 154.0" fill="none" stroke="#b8b8a8" stroke-width="0.8"/>
<path d="M110.4 141.5 L118.7 139.7 L129.0 142.6 L129.0 154.0 L117.3 159.5 L110.4 154.0 Z M110.4 141.5 L117.3 145.6 L129.0 142.6 M117.3 145.6 L117.3 159.5" fill="none" stroke="#7b7b5c" stroke-width="1"/>
<path d="M141.39999999999998 141.8 L146.2 140.8 L147.2 143 V148 L141.39999999999998 146.5 Z" fill="#6cbf3c"/><path d="M142.7 143 L147.2 145 V148.5 L142.7 147 Z" fill="#a3d88a"/>
<path d="M150.2 143 L159.0 141.5 V153.5 L152.2 156.5 V148 L150.2 147.5 Z" fill="#a3d88a"/><path d="M150.2 141.2 L153.2 140.6 L159.0 142.5 L150.2 144.5 Z" fill="#6cbf3c"/>
<path d="M149.2 140.0 L149.2 152.0 M141.2 154.0 L149.2 152.0 L159.5 154.0" fill="none" stroke="#b8b8a8" stroke-width="0.8"/>
<path d="M140.9 141.5 L149.2 139.7 L159.5 142.6 L159.5 154.0 L147.8 159.5 L140.9 154.0 Z M140.9 141.5 L147.8 145.6 L159.5 142.6 M147.8 145.6 L147.8 159.5" fill="none" stroke="#7b7b5c" stroke-width="1"/>
<path d="M174.0 144 L180.5 142.5 L184.5 144 V151.5 L178.5 153.5 L174.0 151.5 Z" fill="#9c9c9c"/><path d="M178.5 146 L184.5 144.5 V151.5 L178.5 153.5 Z" fill="#cfcfcf"/>
<path d="M179.5 140.0 L179.5 152.0 M171.5 154.0 L179.5 152.0 L189.8 154.0" fill="none" stroke="#d8d8d8" stroke-width="0.8"/>
<path d="M171.2 141.5 L179.5 139.7 L189.8 142.6 L189.8 154.0 L178.1 159.5 L171.2 154.0 Z M171.2 141.5 L178.1 145.6 L189.8 142.6 M178.1 145.6 L178.1 159.5" fill="none" stroke="#a8a8a8" stroke-width="1"/>
<circle cx="211.5" cy="149.3" r="8.6" fill="#cde4f5" stroke="#7b8b6c" stroke-width="0.9"/>
<path d="M203 149.3 H220 M211.5 141 V157.6" fill="none" stroke="#9ab0c0" stroke-width="0.5"/>
<ellipse cx="211.5" cy="146" rx="6.5" ry="2.2" fill="none" stroke="#8aa0b0" stroke-width="0.6"/><ellipse cx="211.5" cy="152.6" rx="6.5" ry="2.2" fill="none" stroke="#8aa0b0" stroke-width="0.6"/>
<circle cx="211.5" cy="140.6" r="1.8" fill="#8cc46a" stroke="#6b7b4b" stroke-width="0.4"/>
<circle cx="202.9" cy="149.3" r="1.8" fill="#8cc46a" stroke="#6b7b4b" stroke-width="0.4"/>
<circle cx="220.1" cy="149.3" r="1.8" fill="#8cc46a" stroke="#6b7b4b" stroke-width="0.4"/>
<circle cx="211.5" cy="158" r="1.8" fill="#8cc46a" stroke="#6b7b4b" stroke-width="0.4"/>
<circle cx="206.5" cy="152.3" r="1.4" fill="#8cc46a" stroke="#6b7b4b" stroke-width="0.4"/>
<circle cx="216.5" cy="152.3" r="1.4" fill="#8cc46a" stroke="#6b7b4b" stroke-width="0.4"/>
<circle cx="207.5" cy="146" r="1.2" fill="#8cc46a" stroke="#6b7b4b" stroke-width="0.4"/>
<circle cx="215.5" cy="146" r="1.2" fill="#8cc46a" stroke="#6b7b4b" stroke-width="0.4"/>
<path d="M234.2 143.6 Q240 139 245 143.3 H250.8 M234.2 146.2 Q240 142 245.5 146.5 H250.8 M234.2 152.4 Q240 156.6 245.5 152.3 H250.8 M234.2 155.2 Q240 159.8 245 155.8 H250.8" fill="none" stroke="#85856a" stroke-width="1"/>
<circle cx="239.8" cy="149.3" r="3.6" fill="#9ed286" stroke="#6b7b4b" stroke-width="0.8"/>
<path d="M263 157 V149.5 H268 C273 148 275.5 145 277 142 L282.5 145 C280 152 275 157 268 157 Z" fill="#a8d68a" stroke="#6b7b4b" stroke-width="0.9"/>
<path d="M271 157 C276 154 279 151 281 147 L282.5 148 V157 Z" fill="#cdeee6" stroke="#6b7b4b" stroke-width="0.7"/>
<circle cx="303.4" cy="149.5" r="8" fill="#f4f4f4" stroke="#888" stroke-width="0.9"/>
<circle cx="300.8" cy="146.3" r="2.1" fill="#cfe6e6" stroke="#888" stroke-width="0.5"/><circle cx="306.6" cy="150.6" r="3.2" fill="#9ed286" stroke="#6b7b4b" stroke-width="0.5"/><circle cx="300.2" cy="152.3" r="1.5" fill="#9ed286" stroke="#6b7b4b" stroke-width="0.4"/>
<circle cx="334.6" cy="150.3" r="8.3" fill="#f6f6f6" stroke="#a8a8a8" stroke-width="0.9"/>
<circle cx="326.6" cy="141.2" r="2.4" fill="#f6f6f6" stroke="#a8a8a8" stroke-width="0.8"/><circle cx="337" cy="150" r="3.5" fill="#c8c8c8" stroke="#b0b0b0" stroke-width="0.5"/><circle cx="330.7" cy="152.2" r="1.5" fill="#c8c8c8"/>
<rect x="357" y="142.00" width="2" height="1" fill="#d2d2d2"/>
<rect x="360" y="142.00" width="2" height="1" fill="#d2d2d2"/>
<rect x="357" y="144.85" width="2" height="1" fill="#d2d2d2"/>
<rect x="360" y="144.85" width="2" height="1" fill="#d2d2d2"/>
<rect x="357" y="147.70" width="2" height="1" fill="#d2d2d2"/>
<rect x="360" y="147.70" width="2" height="1" fill="#d2d2d2"/>
<rect x="357" y="150.55" width="2" height="1" fill="#d2d2d2"/>
<rect x="360" y="150.55" width="2" height="1" fill="#d2d2d2"/>
<rect x="357" y="153.40" width="2" height="1" fill="#d2d2d2"/>
<rect x="360" y="153.40" width="2" height="1" fill="#d2d2d2"/>
<rect x="357" y="156.25" width="2" height="1" fill="#d2d2d2"/>
<rect x="360" y="156.25" width="2" height="1" fill="#d2d2d2"/>
<path d="M372.8 142.3 V156.5 H387.3" fill="none" stroke="#7b7b5c" stroke-width="1"/>
<rect x="378" y="145.5" width="5" height="7" fill="#c7e0f4" stroke="#2f7fc0" stroke-width="0.9"/><path d="M380.5 142.8 V145.5 M380.5 152.5 V155 M378.5 142.8 H382.5 M378.5 155 H382.5 M378 148.5 H383" stroke="#2f7fc0" stroke-width="0.9"/>
<path d="M401.5 140.8 H414 Q415.5 140.8 415.5 142.3 V148.5 H409.5 V154.2 H403 Q401.5 154.2 401.5 152.7 Z" fill="#cde4f7" stroke="#8a8a8a" stroke-width="1"/>
<rect x="411.6" y="150.6" width="7" height="7" fill="#a8d68a" stroke="#7b8b6c" stroke-width="0.8" stroke-dasharray="1.2 0.8"/>
<path d="M430.5 138.5 V160 H451.5" fill="none" stroke="#5a5a4a" stroke-width="1"/>
<rect x="431.3" y="157.5" width="2.9" height="2.0" fill="#2a6ab0"/>
<rect x="434.2" y="149" width="2.9" height="10.5" fill="#2a9fe8"/>
<rect x="437.1" y="143" width="2.9" height="16.5" fill="#6cc8b8"/>
<rect x="440" y="138.3" width="2.9" height="21.19999999999999" fill="#5cb84a"/>
<rect x="442.9" y="146" width="2.9" height="13.5" fill="#a8cc30"/>
<rect x="445.8" y="151.5" width="2.9" height="8.0" fill="#f5d020"/>
<rect x="448.7" y="155.5" width="2.9" height="4.0" fill="#f5a820"/>
<circle cx="466.8" cy="144.7" r="3.9" fill="#f8f8f8" stroke="#888" stroke-width="0.9"/><path d="M466.8 142.2 V144.7 L468.6 146.5" fill="none" stroke="#3a8ac0" stroke-width="0.8"/>
<circle cx="476.3" cy="144.7" r="4" fill="#c8b060" stroke="#a09050" stroke-width="0.9"/><circle cx="476.3" cy="144.7" r="2" fill="#d8c890"/>
<polyline points="464.0,153.1 465.1,155.6 466.3,151.7 467.4,155.3 468.6,152.0 469.7,154.9 470.9,152.4 472.0,156.3 473.1,152.7 474.3,156.0 475.4,153.1 476.6,155.6 477.7,151.7 478.9,155.3 480.0,152.0" fill="none" stroke="#2f7fc0" stroke-width="1"/>
<path d="M464 150.5 V158 H480" fill="none" stroke="#a0a0a0" stroke-width="0.8"/>
<path d="M494 141 L506 139.8 L511.5 146 L508 158.5 L496.5 158.5 Z" fill="#a3d48a" stroke="#6b8b4b" stroke-width="0.8"/>
<path d="M496.5 157.5 L510.5 144" stroke="#2a7fd0" stroke-width="1.6"/><path d="M499 151 L506 144.5" stroke="#2a7fd0" stroke-width="3.2" stroke-dasharray="1 0.7"/>
<path d="M494 152 L497 156 M506 140 L508 142" stroke="#8a7a5a" stroke-width="0.8"/>
<circle cx="528.1" cy="144.2" r="3.9" fill="#f8f8f8" stroke="#888" stroke-width="0.9"/><path d="M528.1 141.7 V144.2 L529.9 146.0" fill="none" stroke="#3a8ac0" stroke-width="0.8"/>
<rect x="533.5" y="139.5" width="9" height="8.5" fill="none" stroke="#999" stroke-width="0.7" stroke-dasharray="1 1"/><path d="M535 146.5 L538 141 L541 146.5 Z" fill="#8cc46a"/>
<polyline points="525.5,153.1 526.7,155.6 527.9,151.7 529.0,155.3 530.2,152.0 531.4,154.9 532.6,152.4 533.8,156.3 534.9,152.7 536.1,156.0 537.3,153.1 538.5,155.6 539.6,151.7 540.8,155.3 542.0,152.0" fill="none" stroke="#2f7fc0" stroke-width="1"/>
<path d="M525.5 150.5 V158 H542" fill="none" stroke="#a0a0a0" stroke-width="0.8"/>
<path d="M554.5 143.5 L563.5 139.3 L573 143.5 V154.5 L563.5 159 L554.5 154.5 Z" fill="#cde4f7" stroke="#c0ccd8" stroke-width="0.8"/>
<path d="M554.5 143.5 L563.5 147.5 L573 143.5 M563.5 147.5 V159" fill="none" stroke="#d8e6f2" stroke-width="0.7"/><path d="M563.5 142 V157.5 M557 145.5 L570 154 M570 145.5 L557 154" stroke="#5a5a5a" stroke-width="1"/>
<path d="M588.8 141.6 Q586.2 141.6 586.2 144.2 V147.6 Q586.2 149.5 584.5 149.5 Q586.2 149.5 586.2 151.4 V155 Q586.2 157.6 588.8 157.6 M601 141.6 Q603.6 141.6 603.6 144.2 V147.6 Q603.6 149.5 605.3 149.5 Q603.6 149.5 603.6 151.4 V155 Q603.6 157.6 601 157.6" fill="none" stroke="#5e5e5e" stroke-width="1.4"/>
<circle cx="590.5" cy="154.5" r="1.3" fill="#3a9ad0"/><circle cx="594.6" cy="154.5" r="1.3" fill="#3a9ad0"/><circle cx="598.8" cy="154.5" r="1.3" fill="#3a9ad0"/>
<rect x="617" y="142.00" width="2" height="1" fill="#d2d2d2"/>
<rect x="620" y="142.00" width="2" height="1" fill="#d2d2d2"/>
<rect x="617" y="144.85" width="2" height="1" fill="#d2d2d2"/>
<rect x="620" y="144.85" width="2" height="1" fill="#d2d2d2"/>
<rect x="617" y="147.70" width="2" height="1" fill="#d2d2d2"/>
<rect x="620" y="147.70" width="2" height="1" fill="#d2d2d2"/>
<rect x="617" y="150.55" width="2" height="1" fill="#d2d2d2"/>
<rect x="620" y="150.55" width="2" height="1" fill="#d2d2d2"/>
<rect x="617" y="153.40" width="2" height="1" fill="#d2d2d2"/>
<rect x="620" y="153.40" width="2" height="1" fill="#d2d2d2"/>
<rect x="617" y="156.25" width="2" height="1" fill="#d2d2d2"/>
<rect x="620" y="156.25" width="2" height="1" fill="#d2d2d2"/>
<g transform="rotate(-38 640 147)"><rect x="628.5" y="143.6" width="23" height="7" fill="#f3c31a" stroke="#8a7a3a" stroke-width="0.9"/>
<path d="M631.0 143.8 V146.8" stroke="#8a7a3a" stroke-width="0.6"/>
<path d="M633.5 143.8 V145.8" stroke="#8a7a3a" stroke-width="0.6"/>
<path d="M636.0 143.8 V146.8" stroke="#8a7a3a" stroke-width="0.6"/>
<path d="M638.5 143.8 V145.8" stroke="#8a7a3a" stroke-width="0.6"/>
<path d="M641.0 143.8 V146.8" stroke="#8a7a3a" stroke-width="0.6"/>
<path d="M643.5 143.8 V145.8" stroke="#8a7a3a" stroke-width="0.6"/>
<path d="M646.0 143.8 V146.8" stroke="#8a7a3a" stroke-width="0.6"/>
<path d="M648.5 143.8 V145.8" stroke="#8a7a3a" stroke-width="0.6"/>
<path d="M651.0 143.8 V146.8" stroke="#8a7a3a" stroke-width="0.6"/>
</g>
<path d="M284.5 204.0 Q284.5 203.0 285.5 203.0 H288.5 L289.5 201.5 H294.5 L295.5 203.0 H298.5 Q299.5 203.0 299.5 204.0 V212.5 Q299.5 213.5 298.5 213.5 H285.5 Q284.5 213.5 284.5 212.5 Z" fill="#dcdcdc" stroke="#c4c4c4" stroke-width="0.9"/>
<circle cx="292.0" cy="208.0" r="3.6" fill="#f6f6f6" stroke="#b8b8b8" stroke-width="1.3"/>
<path d="M284.5 216.5 L285.5 209.5 L288 211.5 C291 209.5 295 209.5 296 212.5 C296.5 214 295.5 216 294 217 C294.5 215 293 213 290.5 213.5 L289.8 213.8 L291.5 215.8 Z" fill="#8e8e8e"/>
<path d="M308.5 204.0 Q308.5 203.0 309.5 203.0 H312.5 L313.5 201.5 H318.5 L319.5 203.0 H322.5 Q323.5 203.0 323.5 204.0 V212.5 Q323.5 213.5 322.5 213.5 H309.5 Q308.5 213.5 308.5 212.5 Z" fill="#dcdcdc" stroke="#c4c4c4" stroke-width="0.9"/>
<circle cx="316.0" cy="208.0" r="3.6" fill="#f6f6f6" stroke="#b8b8b8" stroke-width="1.3"/>
<path d="M322.5 216.5 L321.5 209.5 L319 211.5 C316 209.5 312 209.5 311 212.5 C310.5 214 311.5 216 313 217 C312.5 215 314 213 316.5 213.5 L317.2 213.8 L315.5 215.8 Z" fill="#eeeeee" stroke="#a0a0a0" stroke-width="0.8"/>
<rect x="331" y="204" width="1" height="11" fill="#d6d6d6"/>
<path d="M337.5 203.5 V201 H340.0" fill="none" stroke="#8a8a8a" stroke-width="1"/>
<path d="M353.5 203.5 V201 H351.0" fill="none" stroke="#8a8a8a" stroke-width="1"/>
<path d="M337.5 214.5 V217 H340.0" fill="none" stroke="#8a8a8a" stroke-width="1"/>
<path d="M353.5 214.5 V217 H351.0" fill="none" stroke="#8a8a8a" stroke-width="1"/>
<path d="M338.2 205.8 Q338.2 204.8 339.2 204.8 H342.2 L343.2 203.3 H348.2 L349.2 204.8 H352.2 Q353.2 204.8 353.2 205.8 V214.3 Q353.2 215.3 352.2 215.3 H339.2 Q338.2 215.3 338.2 214.3 Z" fill="#c8c8c8" stroke="#a8a8a8" stroke-width="0.9"/>
<circle cx="345.7" cy="209.8" r="3.8" fill="#a0a0a0"/><circle cx="345.7" cy="209.8" r="2.6" fill="#bfe4fb"/>
<rect x="340.2" y="205.8" width="1.5" height="1.5" fill="#e03030"/>
<rect x="360" y="204" width="1" height="11" fill="#d6d6d6"/>
<text x="368.8" y="214.2" font-family="Liberation Sans" font-weight="bold" font-size="11.5" fill="#6b6b4e">3D</text>
<path d="M392 204.0 Q392 203.0 393 203.0 H396 L397 201.5 H402 L403 203.0 H406 Q407 203.0 407 204.0 V212.5 Q407 213.5 406 213.5 H393 Q392 213.5 392 212.5 Z" fill="#c8c8c8" stroke="#a8a8a8" stroke-width="0.9"/>
<circle cx="399.5" cy="208.0" r="3.8" fill="#a0a0a0"/><circle cx="399.5" cy="208.0" r="2.6" fill="#bfe4fb"/>
<rect x="394" y="204.0" width="1.5" height="1.5" fill="#e03030"/>
<path d="M400 210 L406.5 216.5" stroke="#d4a020" stroke-width="2.4" stroke-linecap="round"/><circle cx="399.5" cy="208" r="2.8" fill="#bfe4fb" stroke="#888" stroke-width="0.8"/>
<rect x="414" y="204" width="1" height="11" fill="#d6d6d6"/>
<rect x="422.0" y="201.8" width="15" height="15" fill="none" stroke="#9a9a9a" stroke-width="0.8" stroke-dasharray="1.5 2"/>
<path d="M426 209 H432.5 M429.25 205.5 V212.5" stroke="#7ab35a" stroke-width="3.2"/>
<rect x="446.0" y="201.8" width="15" height="15" fill="none" stroke="#9a9a9a" stroke-width="0.8" stroke-dasharray="1.5 2"/>
<path d="M449.5 209.5 H456.5" stroke="#e02020" stroke-width="2.6"/>
<rect x="470.5" y="201.8" width="15" height="15" fill="none" stroke="#9a9a9a" stroke-width="0.8" stroke-dasharray="1.5 2"/>
<path d="M472.5 206.5 H478.5 M475.5 203.5 V209.5" stroke="#7ab35a" stroke-width="2.4"/><path d="M472 212 H479" stroke="#e02020" stroke-width="2.2"/>
<path d="M481.5 211.5 L482 216 L483 215 L484.8 216.8 L485.7 215.9 L483.9 214.1 L485.2 213.4 Z" fill="#5a5a5a"/>
<rect x="492" y="204" width="1" height="11" fill="#d6d6d6"/>
<rect x="500.0" y="201.8" width="15" height="15" fill="none" stroke="#9a9a9a" stroke-width="0.8" stroke-dasharray="1.5 2"/>
<path d="M503 212 L507.5 204 L512 212 Z" fill="#a3d48a" stroke="#6b8b4b" stroke-width="0.7"/>
<path d="M511.5 212.5 L512 217 L513 216 L514.8 217.8 L515.7 216.9 L513.9 215.1 L515.2 214.4 Z" fill="#5a5a5a"/>
<rect x="524.8" y="201.8" width="15" height="15" fill="none" stroke="#9a9a9a" stroke-width="0.8" stroke-dasharray="1.5 2"/>
<path d="M528 212 L532 204.5 L536 212 Z" fill="none" stroke="#888" stroke-width="0.7"/><circle cx="532" cy="204.5" r="1.4" fill="#d04030"/><circle cx="527.6" cy="212.3" r="1.5" fill="#d04030"/>
<path d="M536.0 211.5 L536.5 216 L537.5 215 L539.3 216.8 L540.2 215.9 L538.4 214.1 L539.7 213.4 Z" fill="#5a5a5a"/>
<path d="M549 205.5 L552 202.5 H562.5 V209 L559.5 211.5 H549 Z" fill="#a3d48a" stroke="#6b8b4b" stroke-width="0.8"/><path d="M549 205.5 H559.5 V211.5" fill="none" stroke="#6b8b4b" stroke-width="0.6"/>
<path d="M556.5 212.5 L557 217 L558 216 L559.8 217.8 L560.7 216.9 L558.9 215.1 L560.2 214.4 Z" fill="#5a5a5a"/>
<path d="M550 202 V216" stroke="#999" stroke-width="0.8" stroke-dasharray="1.5 1.5"/>
<path d="M573 205 L576 202.5 H587 V210 L584 212.5 H573 Z" fill="none" stroke="#bbb" stroke-width="0.6" stroke-dasharray="1 1"/>
<circle cx="575" cy="206" r="1" fill="#d04030"/>
<circle cx="575" cy="210" r="1" fill="#d04030"/>
<circle cx="578" cy="207" r="1" fill="#d04030"/>
<circle cx="578" cy="211" r="1" fill="#d04030"/>
<circle cx="581.5" cy="202.5" r="1" fill="#d04030"/>
<circle cx="587" cy="204.5" r="1" fill="#d04030"/>
<circle cx="587" cy="209" r="1" fill="#d04030"/>
<path d="M581.5 212.5 L582 217 L583 216 L584.8 217.8 L585.7 216.9 L583.9 215.1 L585.2 214.4 Z" fill="#5a5a5a"/>
<path d="M597 209 L603.5 204.5 V212.5 Z" fill="#a3d48a" stroke="#6b8b4b" stroke-width="0.6"/><path d="M604 207 L609 202 M604 210 L609.5 213 M599 204 L602 202.5" stroke="#999" stroke-width="0.6" stroke-dasharray="1 1"/>
<circle cx="621.5" cy="205" r="1.1" fill="#c04a30"/>
<circle cx="625" cy="203.5" r="1.1" fill="#c04a30"/>
<circle cx="624" cy="208" r="1.1" fill="#c04a30"/>
<circle cx="628" cy="206.5" r="1.1" fill="#c04a30"/>
<circle cx="627" cy="210.5" r="1.1" fill="#c04a30"/>
<circle cx="631" cy="209" r="1.1" fill="#c04a30"/>
<circle cx="630.5" cy="204" r="1.1" fill="#c04a30"/>
<path d="M620 207 L633 213 M622 211 L629 214" stroke="#bbb" stroke-width="0.5" stroke-dasharray="1 1"/>
<rect x="644.5" y="202.0" width="14" height="14" fill="none" stroke="#9a9a9a" stroke-width="0.8" stroke-dasharray="1.5 2"/>
<circle cx="648.8" cy="205" r="1.9" fill="#2f8cd0"/><circle cx="648.8" cy="212" r="1.9" fill="#2f8cd0"/><circle cx="654.5" cy="209.5" r="2.6" fill="#a3d48a" stroke="#6b8b4b" stroke-width="0.7"/><path d="M656 211 L659 214" stroke="#555" stroke-width="1.2"/>
<path d="M670 205 L673 202 H680 V211 L677 214.5 H670 Z" fill="#d8d8d8" stroke="#aaa" stroke-width="0.8"/><path d="M670 205 H677 V214.5 M677 205 L680 202" fill="none" stroke="#aaa" stroke-width="0.7"/>
<path d="M679.0 209.5 L679.5 214 L680.5 213 L682.3 214.8 L683.2 213.9 L681.4 212.1 L682.7 211.4 Z" fill="#5a5a5a"/>
<circle cx="700" cy="208.5" r="2.2" fill="none" stroke="#bbb" stroke-width="0.8"/>
<path d="M702.5 211.0 L703 215.5 L704 214.5 L705.8 216.3 L706.7 215.4 L704.9 213.6 L706.2 212.9 Z" fill="#5a5a5a"/>
<path d="M720 214 L725 205 L730 214 Z" fill="#a3d48a" stroke="#6b8b4b" stroke-width="0.7"/>
<path d="M728.5 211.5 L729 216 L730 215 L731.8 216.8 L732.7 215.9 L730.9 214.1 L732.2 213.4 Z" fill="#5a5a5a"/>
<rect x="856" y="202.5" width="14" height="14" fill="#c9d3ec" stroke="#9aa3b8" stroke-width="0.8"/><path d="M863 202.5 V216.5" stroke="#8a93a8" stroke-width="1.2"/>
<rect x="881" y="202.5" width="14" height="14" fill="#c9d3ec" stroke="#9aa3b8" stroke-width="0.8"/><path d="M881 209.5 H895" stroke="#8a93a8" stroke-width="1.2"/>
<rect x="905.6" y="202.6" width="15.3" height="14.6" fill="#fff" stroke="#2a2a2a" stroke-width="1.6"/><rect x="904.8" y="201.8" width="16.9" height="3.6" fill="#2a2a2a"/>
<rect x="932" y="204" width="11" height="11" rx="2.5" fill="#eee" stroke="#8a8a8a"/><path d="M935 207 L940 212 M940 207 L935 212" stroke="#444" stroke-width="1.6"/>
<defs><linearGradient id="srv" x1="0" y1="0" x2="1" y2="0"><stop offset="0" stop-color="#777"/><stop offset="0.5" stop-color="#e8e8e8"/><stop offset="1" stop-color="#999"/></linearGradient></defs>
<rect x="28.4" y="196.4" width="6.6" height="12.2" fill="url(#srv)" stroke="#151515" stroke-width="1"/><rect x="29.6" y="197.8" width="3.8" height="1.8" fill="#222"/><path d="M30 201 H33 M30 203 H33 M30 205 H33" stroke="#aaa" stroke-width="0.6"/>
<rect x="31.6" y="189" width="1" height="4.5" fill="#a8a8a8"/><rect x="31.6" y="211.8" width="1" height="3.8" fill="#a8a8a8"/>
<path d="M6.5 224.5 Q12 219 17.5 224.5" fill="none" stroke="#999" stroke-width="0.8"/><path d="M6.8 224.5 Q12 228 17.2 224.5" fill="none" stroke="#aaa" stroke-width="0.7"/><path d="M8 226 L7.2 228 M10.5 227 L10.2 229 M13.5 227 L13.8 229 M16 226 L16.8 228" stroke="#aaa" stroke-width="0.6"/>
<path d="M25 219.5 L32.5 218.3 L38.3 221.3 L30.4 222.9 Z" fill="#4a9a5a" stroke="#6b6b4e" stroke-width="0.6"/>
<path d="M25 219.5 L30.4 222.9 L30.4 231 L25 227.5 Z" fill="#2f7a50" stroke="#6b6b4e" stroke-width="0.6"/>
<path d="M30.4 222.9 L38.3 221.3 L38.3 229.6 L30.4 231 Z" fill="#5cb860" stroke="#6b6b4e" stroke-width="0.6"/>
<rect x="247.4" y="173.2" width="9.2" height="9.2" rx="2" fill="none" stroke="#7a7a7a" stroke-width="1.2"/>
<path d="M249.8 180.6 V177.6 Q249.8 176.6 250.8 176.6 H252.3 V179.1 Q252.3 180.6 250.8 180.6 Z M251.3 176.6 Q251.3 175.1 252.8 175.1 H254.3 V177.6 Q254.3 179.1 252.8 179.1" fill="none" stroke="#777" stroke-width="1"/>
<rect x="260.40000000000003" y="173.2" width="9.2" height="9.2" rx="2" fill="none" stroke="#7a7a7a" stroke-width="1.2"/>
<path d="M262.8 175.6 L267.2 180.0 M267.2 175.6 L262.8 180.0" stroke="#666" stroke-width="1.7"/>
<rect x="247.4" y="366.20000000000005" width="9.2" height="9.2" rx="2" fill="none" stroke="#7a7a7a" stroke-width="1.2"/>
<path d="M249.8 373.6 V370.6 Q249.8 369.6 250.8 369.6 H252.3 V372.1 Q252.3 373.6 250.8 373.6 Z M251.3 369.6 Q251.3 368.1 252.8 368.1 H254.3 V370.6 Q254.3 372.1 252.8 372.1" fill="none" stroke="#777" stroke-width="1"/>
<rect x="260.40000000000003" y="366.20000000000005" width="9.2" height="9.2" rx="2" fill="none" stroke="#7a7a7a" stroke-width="1.2"/>
<path d="M262.8 368.6 L267.2 373.0 M267.2 368.6 L262.8 373.0" stroke="#666" stroke-width="1.7"/>
<rect x="131" y="327" width="1" height="1" fill="#b0b0b0"/>
<rect x="133" y="327" width="1" height="1" fill="#b0b0b0"/>
<rect x="135" y="327" width="1" height="1" fill="#b0b0b0"/>
<rect x="137" y="327" width="1" height="1" fill="#b0b0b0"/>
<rect x="139" y="327" width="1" height="1" fill="#b0b0b0"/>
<rect x="141" y="327" width="1" height="1" fill="#b0b0b0"/>
<rect x="143" y="327" width="1" height="1" fill="#b0b0b0"/>
<rect x="275" y="392.5" width="1" height="1" fill="#b8b8b8"/>
<rect x="275" y="395.3" width="1" height="1" fill="#b8b8b8"/>
<rect x="275" y="398.1" width="1" height="1" fill="#b8b8b8"/>
<rect x="275" y="400.9" width="1" height="1" fill="#b8b8b8"/>
<rect x="275" y="403.7" width="1" height="1" fill="#b8b8b8"/>
<rect x="275" y="406.5" width="1" height="1" fill="#b8b8b8"/>
<path d="M22 399 L24 397.5 H28.5 V406.5 L26.5 408 H22 Z" fill="#b9b9a6" stroke="#8a8a7a" stroke-width="0.6"/><rect x="24.5" y="399.5" width="4" height="8" fill="#f0e8ec" stroke="#999" stroke-width="0.5"/><path d="M27 400 L31.5 396 M29 396 H32 V399" stroke="#8cc46a" stroke-width="1.8"/>
<circle cx="103.3" cy="402" r="5.6" fill="none" stroke="#d42a2a" stroke-width="2"/><path d="M99.5 405.8 L107.1 398.2" stroke="#d42a2a" stroke-width="2"/>
<path d="M172.5 398 L181 406.5 M181 398 L172.5 406.5" stroke="#e02424" stroke-width="3"/>
<polygon points="250.07,428.35 250.85,426.42 254.15,426.42 254.93,428.35 254.97,428.37 257.03,428.08 258.68,430.93 257.40,432.58 257.40,432.62 258.68,434.27 257.03,437.12 254.97,436.83 254.93,436.85 254.15,438.78 250.85,438.78 250.07,436.85 250.03,436.83 247.97,437.12 246.32,434.27 247.60,432.62 247.60,432.58 246.32,430.93 247.97,428.08 250.03,428.37" fill="#c9c9c9" stroke="#b0b0b0" stroke-width="0.6" stroke-linejoin="round"/><circle cx="252.5" cy="432.6" r="1.9" fill="#f4f4f4"/>
<rect x="13.7" y="476.0" width="12" height="11.5" fill="#fff" stroke="#c0c0c0"/>
<path d="M16.2 481.5 L19.0 485.3 L23.7 478.0" fill="none" stroke="#111" stroke-width="1.6"/>
<rect x="13.7" y="496.0" width="12" height="11.5" fill="#fff" stroke="#c0c0c0"/>
<path d="M16.2 501.5 L19.0 505.3 L23.7 498.0" fill="none" stroke="#111" stroke-width="1.6"/>
<rect x="13.7" y="514.5" width="12" height="11.5" fill="#fff" stroke="#c0c0c0"/>
<path d="M16.2 520 L19.0 523.8 L23.7 516.5" fill="none" stroke="#111" stroke-width="1.6"/>
<rect x="13.7" y="533.0" width="12" height="11.5" fill="#fff" stroke="#c0c0c0"/>
<path d="M16.2 538.5 L19.0 542.3 L23.7 535.0" fill="none" stroke="#111" stroke-width="1.6"/>
<rect x="13.7" y="551.5" width="12" height="11.5" fill="#fff" stroke="#c0c0c0"/>
<path d="M16.2 557 L19.0 560.8 L23.7 553.5" fill="none" stroke="#111" stroke-width="1.6"/>
<rect x="13.7" y="596.0" width="12" height="11.5" fill="#fff" stroke="#c0c0c0"/>
<path d="M16.2 601.5 L19.0 605.3 L23.7 598.0" fill="none" stroke="#111" stroke-width="1.6"/>
<clipPath id="clp"><rect x="9" y="451" width="243" height="156"/></clipPath>
<g clip-path="url(#clp)"><circle cx="250.5" cy="481" r="5.2" fill="#fff" stroke="#3a8ac0" stroke-width="1.4"/><path d="M248 480 H253 L250.5 483.5 Z" fill="#3a8ac0"/>
<circle cx="250.5" cy="601.5" r="5.2" fill="#fff" stroke="#3a8ac0" stroke-width="1.4"/><path d="M248 600.5 H253 L250.5 604 Z" fill="#3a8ac0"/></g>
<path d="M254.5 461 H261.5 L258 457.5 Z" fill="#555"/><path d="M254.5 597.5 H261.5 L258 601 Z" fill="#555"/>
<path d="M17 609.5 V617 L13.5 613.25 Z" fill="#555"/><path d="M242.5 609.5 V617 L246 613.25 Z" fill="#555"/>
<path d="M346 111 H352 L349 114 Z" fill="#bdbdbd"/><path d="M423.5 111 H429.5 L426.5 114 Z" fill="#bdbdbd"/><path d="M578 111 H584 L581 114 Z" fill="#bdbdbd"/>
<path d="M703 75.3 H710 L706.5 79 Z" fill="#555"/>
<path d="M741 74.5 H749 L745 71 Z" fill="#bbb"/><path d="M741 80.5 H749 L745 84 Z" fill="#555"/>
<path d="M483 638 L489.5 644.5 M489.5 638 L483 644.5" stroke="#8a8a8a" stroke-width="2.4"/>
<path d="M332.2 572 V550" stroke="#d8d030" stroke-width="1.5"/><path d="M330.4 552.5 L332.2 547 L334 552.5 Z" fill="#e8e020"/>
<path d="M333 574 H356" stroke="#e01818" stroke-width="2"/><path d="M355 571.8 L359.5 574 L355 576.2 Z" fill="#ff1010"/>
<circle cx="332.4" cy="574" r="2.5" fill="#0a6a0a"/>
<g font-family="Liberation Sans" font-size="7.5" fill="#f0f0f0" font-style="italic"><text x="334.5" y="550.5">Y</text><text x="334.5" y="571">Z</text><text x="356.5" y="573">X</text></g></svg>
</div></body></html>
